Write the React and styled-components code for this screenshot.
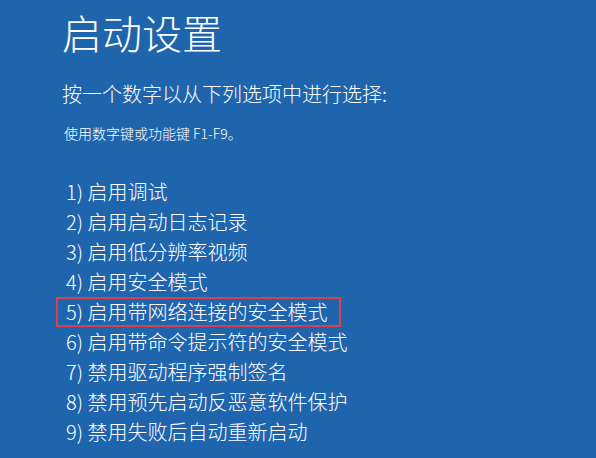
import React from "react";
import styled, { createGlobalStyle } from "styled-components";

const GlobalStyle = createGlobalStyle`
  html, body {
    margin: 0;
    padding: 0;
    background: #1f65ad;
  }
  body {
    font-family: "Noto Sans CJK SC", "Noto Sans", sans-serif;
    font-weight: 300;
    color: #ffffff;
  }
`;

const Screen = styled.div`
  width: 596px;
  height: 458px;
  overflow: hidden;
  background: #1f65ad;
  box-sizing: border-box;
  padding: 8px 0 0 62px;
  display: flex;
  flex-direction: column;
`;

const Title = styled.h1`
  margin: 0;
  font-size: 40px;
  font-weight: 300;
  line-height: 48px;
  letter-spacing: 0;
`;

const Prompt = styled.div`
  margin-top: 23px;
  font-size: 20px;
  line-height: 30px;
`;

const Hint = styled.div`
  margin-top: 14px;
  margin-left: 2px;
  font-size: 14px;
  line-height: 20px;
`;

const OptionList = styled.ol`
  list-style: none;
  margin: 34px 0 0 -6px;
  padding: 0;
  display: flex;
  flex-direction: column;
`;

const Option = styled.li`
  width: 285px;
  height: 30px;
  box-sizing: border-box;
  padding-left: 8px;
  border: 2px solid ${(p) => (p.$active ? "#d9404c" : "transparent")};
  font-size: 20px;
  line-height: 26px;
  white-space: nowrap;
`;

const options = [
  "1) 启用调试",
  "2) 启用启动日志记录",
  "3) 启用低分辨率视频",
  "4) 启用安全模式",
  "5) 启用带网络连接的安全模式",
  "6) 启用带命令提示符的安全模式",
  "7) 禁用驱动程序强制签名",
  "8) 禁用预先启动反恶意软件保护",
  "9) 禁用失败后自动重新启动",
];

const App = () => {
  return (
    <>
      <GlobalStyle />
      <Screen>
        <Title>启动设置</Title>
        <Prompt>按一个数字以从下列选项中进行选择:</Prompt>
        <Hint>使用数字键或功能键 F1-F9。</Hint>
        <OptionList>
          {options.map((text, i) => (
            <Option key={text} $active={i === 4}>
              {text}
            </Option>
          ))}
        </OptionList>
      </Screen>
    </>
  );
};

export default App;
